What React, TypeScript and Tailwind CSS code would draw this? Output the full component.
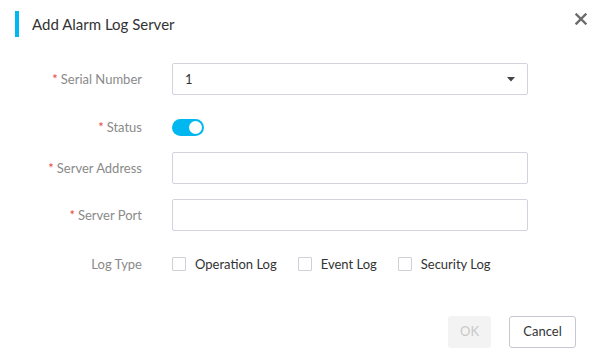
import * as React from 'react'

const font = { fontFamily: '"Lato", "Liberation Sans", sans-serif' }

function Label({ text, required }: { text: string; required?: boolean }) {
  return (
    <div className="w-[142px] shrink-0 pt-[2px] text-right text-[13px] text-[#8a8a8a]">
      {required && <span className="mr-[3px] text-[#e5483f]">*</span>}
      {text}
    </div>
  )
}

function TextInput() {
  return <div className="h-[32px] w-[356px] rounded-[2px] border border-[#d4d2dc] bg-white" />
}

function Check({ label }: { label: string }) {
  return (
    <label className="flex items-center">
      <span className="h-[14px] w-[14px] rounded-[1px] border border-[#cfcfd6] bg-white" />
      <span className="ml-[9px] pt-[1px] text-[13px] text-[#333]">{label}</span>
    </label>
  )
}

export default function App() {
  return (
    <div style={font} className="relative h-[360px] w-[604px] overflow-hidden bg-white">
      {/* header */}
      <div className="flex h-[48px] items-center pl-[15px]">
        <div className="h-[26px] w-[4px] bg-[#00b7f0]" />
        <div className="ml-[13px] text-[15px] text-[#333]">Add Alarm Log Server</div>
      </div>
      <button className="absolute right-[16px] top-[12px] flex h-[14px] w-[14px] items-center justify-center text-[#6b6b6b]">
        <svg width="12" height="12" viewBox="0 0 12 12">
          <path d="M1.5 1.5 L10.5 10.5 M10.5 1.5 L1.5 10.5" stroke="currentColor" strokeWidth="2.4" strokeLinecap="square" />
        </svg>
      </button>

      {/* form */}
      <div className="mt-[15px] flex flex-col">
        <div className="flex h-[32px] items-center gap-[30px]">
          <Label text="Serial Number" required />
          <div className="flex h-[32px] w-[356px] items-center justify-between rounded-[2px] border border-[#d4d2dc] bg-white pl-[12px] pr-[12px]">
            <span className="pt-[1px] text-[13px] text-[#333]">1</span>
            <svg width="8" height="5" viewBox="0 0 8 5">
              <path d="M0 0 L8 0 L4 4.5 Z" fill="#444" />
            </svg>
          </div>
        </div>

        <div className="mt-[16px] flex h-[32px] items-center gap-[30px]">
          <Label text="Status" required />
          <div className="relative h-[17px] w-[32px] rounded-full bg-[#00b7f0]">
            <span className="absolute right-[2px] top-[2px] h-[13px] w-[13px] rounded-full bg-white" />
          </div>
        </div>

        <div className="mt-[9px] flex h-[32px] items-center gap-[30px]">
          <Label text="Server Address" required />
          <TextInput />
        </div>

        <div className="mt-[15px] flex h-[32px] items-center gap-[30px]">
          <Label text="Server Port" required />
          <TextInput />
        </div>

        <div className="mt-[17px] flex h-[32px] items-center gap-[30px]">
          <Label text="Log Type" />
          <div className="flex items-center gap-[21px]">
            <Check label="Operation Log" />
            <Check label="Event Log" />
            <Check label="Security Log" />
          </div>
        </div>
      </div>

      {/* footer */}
      <div className="mt-[36px] flex justify-end gap-[18px] pr-[28px]">
        <button className="h-[32px] w-[43px] rounded-[3px] bg-[#f3f3f3] text-[13px] text-[#c9c9c9]">OK</button>
        <button className="h-[32px] w-[67px] rounded-[3px] border border-[#c9c7d2] bg-white text-[13px] text-[#333]">Cancel</button>
      </div>
    </div>
  )
}
